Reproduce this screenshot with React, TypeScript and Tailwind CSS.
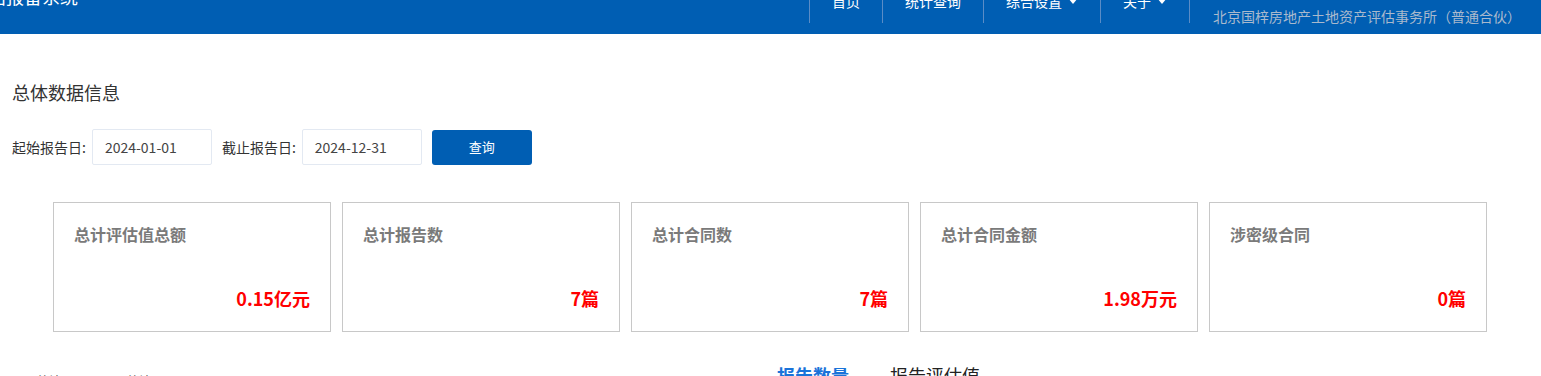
const FONT = { fontFamily: '"Microsoft YaHei", "Noto Sans CJK SC", "Noto Sans", sans-serif' };

const NAV = [
  { label: '首页', caret: false },
  { label: '统计查询', caret: false },
  { label: '综合设置', caret: true },
  { label: '关于', caret: true },
];

const STATS = [
  { title: '总计评估值总额', value: '0.15亿元' },
  { title: '总计报告数', value: '7篇' },
  { title: '总计合同数', value: '7篇' },
  { title: '总计合同金额', value: '1.98万元' },
  { title: '涉密级合同', value: '0篇' },
];

function Caret() {
  return (
    <svg width="10" height="6" viewBox="0 0 10 6" className="ml-[6px]">
      <path d="M0 0h10L5 6z" fill="#fff" />
    </svg>
  );
}

function Header() {
  return (
    <header className="flex h-[34px] items-start overflow-hidden bg-[#005eb3]">
      <div className="flex w-[78px] shrink-0 justify-end overflow-hidden whitespace-nowrap">
        <span className="-mt-[16px] text-[18px] leading-[24px] text-white">评估报备系统</span>
      </div>
      <nav className="ml-auto flex h-[23px]">
        {NAV.map((item) => (
          <div
            key={item.label}
            className="flex items-start border-l border-[#5a8cc6] px-[22px] text-[14px] text-white"
          >
            <span className="-mt-[9px] flex items-center leading-[20px]">
              {item.label}
              {item.caret && <Caret />}
            </span>
          </div>
        ))}
        <div className="flex items-center border-l border-[#5a8cc6] pl-[23px] pr-[20px]">
          <span className="mt-[9px] text-[14px] text-[#a9b9cd]">北京国梓房地产土地资产评估事务所（普通合伙）</span>
        </div>
      </nav>
    </header>
  );
}

function DateField({ label, value }: { label: string; value: string }) {
  return (
    <div className="flex items-center">
      <span className="mr-[6px] text-[14px] text-[#333]">{label}</span>
      <div className="flex h-[36px] w-[120px] items-center rounded-[2px] border border-[#e3e9f2] pl-[12px] text-[14px] text-[#444]">
        {value}
      </div>
    </div>
  );
}

export default function App() {
  return (
    <div className="h-[376px] overflow-hidden bg-white" style={FONT}>
      <Header />
      <section className="pl-[12px] pt-[46px]">
        <h2 className="text-[18px] leading-[24px] text-[#333]">总体数据信息</h2>
        <div className="mt-[25px] flex items-center gap-[10px]">
          <DateField label="起始报告日:" value="2024-01-01" />
          <DateField label="截止报告日:" value="2024-12-31" />
          <button className="h-[35px] w-[100px] rounded-[3px] bg-[#005eb3] text-[13px] text-white">查询</button>
        </div>
      </section>
      <div className="ml-[53px] mt-[37px] flex gap-[11px]">
        {STATS.map((s) => (
          <div key={s.title} className="flex h-[130px] w-[278px] flex-col border border-[#c8c8c8] px-[20px]">
            <div className="mt-[20px] text-[16px] font-bold leading-[22px] text-[#7a7a7a]">{s.title}</div>
            <div className="mt-[41px] text-right text-[18px] font-bold leading-[24px] text-[#ff0000]">{s.value}</div>
          </div>
        ))}
      </div>
      <div className="mt-[31px] flex items-start">
        <div className="flex w-[777px] shrink-0 gap-[66px] pl-[37px] pt-[9px] text-[12px] text-[#555]">
          <span>统计</span>
          <span>统计</span>
        </div>
        <div className="flex gap-[41px] text-[18px] leading-[24px]">
          <span className="font-bold text-[#1a73d9]">报告数量</span>
          <span className="text-[#222]">报告评估值</span>
        </div>
      </div>
    </div>
  );
}
